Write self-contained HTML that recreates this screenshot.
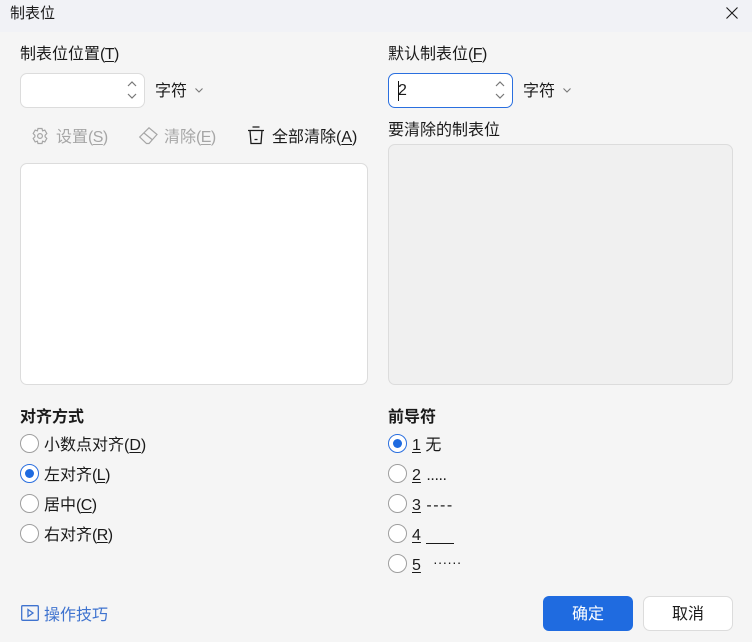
<!DOCTYPE html>
<html lang="zh">
<head>
<meta charset="utf-8">
<style>
html,body{margin:0;padding:0}
body{width:752px;height:642px;overflow:hidden;background:#f5f5f5;position:relative;font-family:"Liberation Sans","Noto Sans CJK SC",sans-serif;font-size:16px;color:#1a1a1a}
.t{position:absolute;white-space:nowrap;line-height:22px;height:22px}
.t u{text-underline-offset:2px}
.l{letter-spacing:-.6px}
.b{font-weight:700}
.g{color:#a6a6a6}
.box{position:absolute;box-sizing:border-box;border:1px solid #dcdcdc;border-radius:7px;background:#fff}
.r{position:absolute;box-sizing:border-box;width:19px;height:19px;border-radius:50%;border:1.5px solid #9e9e9e;background:#fff;left:20px}
.r.on{border-color:#2a6fdf}
.r.on::after{content:"";position:absolute;left:3.5px;top:3.5px;width:9px;height:9px;border-radius:50%;background:#1f6be0}
.rr{left:388px}
svg{position:absolute;overflow:visible}
</style>
</head>
<body>
<div style="position:absolute;left:0;top:0;width:752px;height:32px;background:#f1f2f6"></div>
<div class="t" style="left:10px;top:3px;font-size:15px">制表位</div>
<svg style="left:726px;top:7px" width="12" height="12" viewBox="0 0 12 12" fill="none" stroke="#1a1a1a" stroke-width="1.1"><path d="M.5.5l11 11M11.500.5l-11 11"/></svg>

<div class="t" style="left:20px;top:44px">制表位位置<span class="l">(<u>T</u>)</span></div>
<div class="box" style="left:20px;top:73px;width:125px;height:35px"></div>
<svg style="left:126px;top:80px" width="12" height="20" viewBox="0 0 12 20" fill="none" stroke="#777" stroke-width="1.2"><path d="M2 6l4-4 4 4M2 14l4 4 4-4"/></svg>
<div class="t" style="left:155px;top:81px">字符</div>
<svg style="left:194px;top:87px" width="10" height="7" viewBox="0 0 10 7" fill="none" stroke="#777" stroke-width="1.1"><path d="M1.500 1.500L5 5l3.500-3.500"/></svg>

<svg style="left:31px;top:127px" width="18" height="18" viewBox="0 0 18 18" fill="none" stroke="#a6a6a6" stroke-width="1.2"><path d="M7 1.500h4l.6 2.300 2.200-.7 2 3.400-1.700 1.700v1.600l1.700 1.700-2 3.400-2.200-.7-.6 2.300H7l-.6-2.300-2.200.7-2-3.400 1.700-1.700V8.200L2.200 6.500l2-3.400 2.200.7z"/><circle cx="9" cy="9" r="2.400"/></svg>
<div class="t g" style="left:56px;top:127px">设置<span class="l">(<u>S</u>)</span></div>
<svg style="left:139px;top:127px" width="19" height="18" viewBox="0 0 19 18" fill="none" stroke="#a6a6a6" stroke-width="1.200"><path d="M.7 10L10 .8 18 7.500 10 16.500H7.500zM5 6l8.600 7"/></svg>
<div class="t g" style="left:164px;top:127px">清除<span class="l">(<u>E</u>)</span></div>
<svg style="left:247px;top:126px" width="18" height="19" viewBox="0 0 18 19" fill="none" stroke="#1a1a1a" stroke-width="1.300"><path d="M5.500 1h7M1 4.500h16M3 4.500l1 13h10l1-13M7.500 13.500h3"/></svg>
<div class="t" style="left:272px;top:127px">全部清除(<u>A</u>)</div>

<div class="box" style="left:20px;top:163px;width:348px;height:222px"></div>

<div class="t" style="left:388px;top:44px">默认制表位<span class="l">(<u>F</u>)</span></div>
<div class="box" style="left:388px;top:73px;width:125px;height:35px;border-color:#2a6fdf"></div>
<div style="position:absolute;left:398px;top:81px;width:1px;height:20px;background:#111"></div>
<div class="t" style="left:398px;top:80px">2</div>
<svg style="left:494px;top:80px" width="12" height="20" viewBox="0 0 12 20" fill="none" stroke="#777" stroke-width="1.2"><path d="M2 6l4-4 4 4M2 14l4 4 4-4"/></svg>
<div class="t" style="left:523px;top:81px">字符</div>
<svg style="left:562px;top:87px" width="10" height="7" viewBox="0 0 10 7" fill="none" stroke="#777" stroke-width="1.1"><path d="M1.500 1.500L5 5l3.500-3.500"/></svg>
<div class="t" style="left:388px;top:120px">要清除的制表位</div>
<div class="box" style="left:388px;top:144px;width:345px;height:241px;background:#f0f0f0"></div>

<div class="t b" style="left:20px;top:407px">对齐方式</div>
<div class="r" style="top:434px"></div>
<div class="t" style="left:44px;top:435px">小数点对齐(<u>D</u>)</div>
<div class="r on" style="top:464px"></div>
<div class="t" style="left:44px;top:465px">左对齐<span class="l">(<u>L</u>)</span></div>
<div class="r" style="top:494px"></div>
<div class="t" style="left:44px;top:495px">居中<span class="l">(<u>C</u>)</span></div>
<div class="r" style="top:524px"></div>
<div class="t" style="left:44px;top:525px">右对齐<span class="l">(<u>R</u>)</span></div>

<div class="t b" style="left:388px;top:407px">前导符</div>
<div class="r rr on" style="top:434px"></div>
<div class="t" style="left:412px;top:435px"><u>1</u> <span style="margin-left:0">无</span></div>
<div class="r rr" style="top:464px"></div>
<div class="t" style="left:412px;top:465px"><u>2</u> <span style="margin-left:1px;letter-spacing:-.4px">.....</span></div>
<div class="r rr" style="top:494px"></div>
<div class="t" style="left:412px;top:495px"><u>3</u> <span style="margin-left:1px;letter-spacing:1.500px">----</span></div>
<div class="r rr" style="top:524px"></div>
<div class="t" style="left:412px;top:525px"><u>4</u></div>
<div style="position:absolute;left:426px;top:543px;width:28px;height:1px;background:#1a1a1a"></div>
<div class="r rr" style="top:554px"></div>
<div class="t" style="left:412px;top:555px"><u>5</u></div>
<div class="t" style="left:433px;top:551px;font-size:14px;letter-spacing:.1px">······</div>

<svg style="left:21px;top:605px" width="18" height="16" viewBox="0 0 18 16" fill="none" stroke="#3f73cf" stroke-width="1.300"><rect x=".7" y=".7" width="16.600" height="14.600" rx="1"/><path d="M7 4.500l5 3.500-5 3.500z"/></svg>
<div class="t" style="left:44px;top:605px;color:#3f73cf">操作技巧</div>

<div style="position:absolute;left:543px;top:596px;width:90px;height:35px;border-radius:6px;background:#1f6be0;color:#fff;text-align:center;line-height:37px">确定</div>
<div class="box" style="left:643px;top:596px;width:90px;height:35px;text-align:center;line-height:35px">取消</div>
</body>
</html>
